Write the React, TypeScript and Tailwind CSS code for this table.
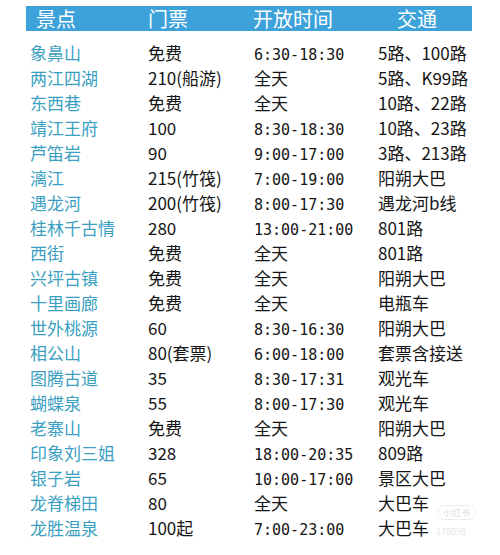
const ROWS = [
  ["象鼻山", "免费", "6:30-18:30", "5路、100路"],
  ["两江四湖", "210(船游)", "全天", "5路、K99路"],
  ["东西巷", "免费", "全天", "10路、22路"],
  ["靖江王府", "100", "8:30-18:30", "10路、23路"],
  ["芦笛岩", "90", "9:00-17:00", "3路、213路"],
  ["漓江", "215(竹筏)", "7:00-19:00", "阳朔大巴"],
  ["遇龙河", "200(竹筏)", "8:00-17:30", "遇龙河b线"],
  ["桂林千古情", "280", "13:00-21:00", "801路"],
  ["西街", "免费", "全天", "801路"],
  ["兴坪古镇", "免费", "全天", "阳朔大巴"],
  ["十里画廊", "免费", "全天", "电瓶车"],
  ["世外桃源", "60", "8:30-16:30", "阳朔大巴"],
  ["相公山", "80(套票)", "6:00-18:00", "套票含接送"],
  ["图腾古道", "35", "8:30-17:31", "观光车"],
  ["蝴蝶泉", "55", "8:00-17:30", "观光车"],
  ["老寨山", "免费", "全天", "阳朔大巴"],
  ["印象刘三姐", "328", "18:00-20:35", "809路"],
  ["银子岩", "65", "10:00-17:00", "景区大巴"],
  ["龙脊梯田", "80", "全天", "大巴车"],
  ["龙胜温泉", "100起", "7:00-23:00", "大巴车"],
];

const cols = "grid grid-cols-[122px_105px_125px_94px]";

export default function App() {
  return (
    <div className="relative h-[555px] w-[500px] overflow-hidden bg-white pl-[26px] pt-[6px] font-['Noto_Sans_CJK_SC',sans-serif]">
      <div className={`${cols} h-[25px] w-[446px] items-center bg-[#3ea2da] text-[20px] leading-[25px] text-white`}>
        <span className="pl-[10px]">景点</span>
        <span>门票</span>
        <span>开放时间</span>
        <span className="pl-[19px]">交通</span>
      </div>

      <div className="mt-[9px] w-[446px]">
        {ROWS.map(([name, price, hours, bus]) => (
          <div key={name} className={`${cols} h-[25px] items-baseline text-[17px] leading-[25px] text-[#151515]`}>
            <span className="pl-[4px] text-[#3b9fc2]">{name}</span>
            <span>{price}</span>
            {/\d/.test(hours) ? (
              <span className="pl-[1px] font-['DejaVu_Sans_Mono',monospace] text-[15px]">{hours}</span>
            ) : (
              <span className="pl-[1px]">{hours}</span>
            )}
            <span>{bus}</span>
          </div>
        ))}
      </div>

      {/* faint watermark */}
      <div className="absolute left-[437px] top-[505px] rounded-full border border-[#ececec] px-[5px] text-[9px] leading-[13px] text-[#e2e2e2]">
        小红书
      </div>
      <div className="absolute left-[436px] top-[526px] text-[9px] leading-[12px] text-[#e4e4e4]">
        178098
      </div>
    </div>
  );
}
